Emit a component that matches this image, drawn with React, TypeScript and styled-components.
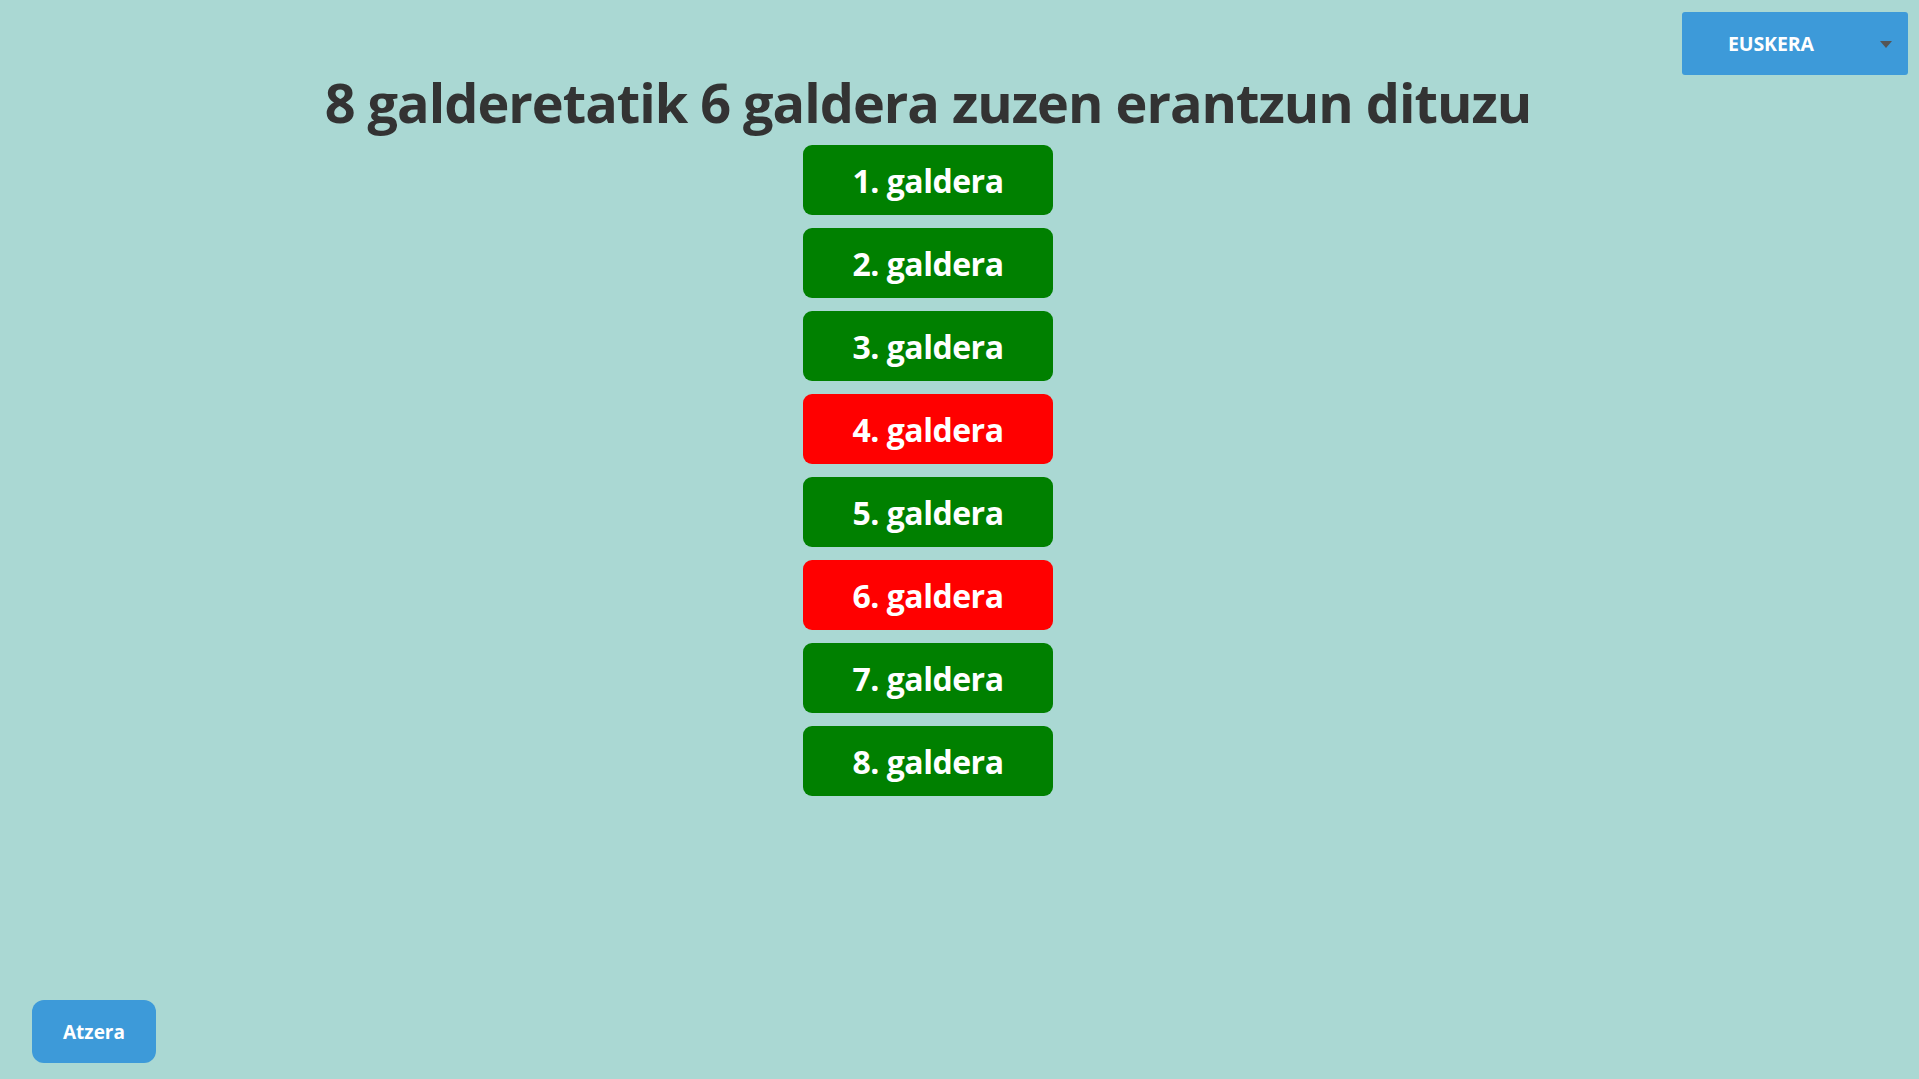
import React from "react";
import styled, { createGlobalStyle } from "styled-components";

const GlobalStyle = createGlobalStyle`
  html, body {
    margin: 0;
    padding: 0;
    background: #aad8d3;
  }
  body {
    font-family: "Open Sans", "Noto Sans", Arial, sans-serif;
  }
  * { box-sizing: border-box; }
`;

const Page = styled.div`
  min-height: 100vh;
  display: flex;
  flex-direction: column;
  background: #aad8d3;
`;

const TopBar = styled.div`
  display: flex;
  justify-content: flex-end;
  padding: 12px 11px 0 0;
`;

const LangSelect = styled.div`
  position: relative;
  width: 226px;
  height: 63px;
  background: #3d9ad9;
  border-radius: 3px;
  display: flex;
  align-items: center;
  padding-left: 46px;
  color: #ffffff;
  font-family: "Open Sans", Arial, sans-serif;
  font-weight: 700;
  font-size: 19.5px;
  letter-spacing: -0.1px;
  cursor: pointer;
`;

const Caret = styled.span`
  position: absolute;
  right: 16px;
  top: 29px;
  width: 0;
  height: 0;
  border-left: 6px solid transparent;
  border-right: 6px solid transparent;
  border-top: 7px solid #555555;
`;

const Main = styled.main`
  display: flex;
  flex-direction: column;
  align-items: center;
  padding-right: 63px;
`;

const Title = styled.h1`
  margin: 0 0 16px 0;
  font-family: "Open Sans", Arial, sans-serif;
  font-weight: 700;
  font-size: 54px;
  line-height: 1;
  color: #333333;
  letter-spacing: -1px;
`;

const QuestionList = styled.div`
  display: flex;
  flex-direction: column;
  gap: 13px;
`;

const QuestionButton = styled.button<{ $correct: boolean }>`
  width: 250px;
  height: 70px;
  border: none;
  border-radius: 9px;
  background: ${(p) => (p.$correct ? "#008000" : "#ff0000")};
  color: #ffffff;
  font-family: "Open Sans", Arial, sans-serif;
  font-weight: 700;
  font-size: 32px;
  letter-spacing: -0.5px;
  cursor: pointer;
  display: flex;
  align-items: center;
  justify-content: center;
  padding: 0;
`;

const Footer = styled.div`
  margin-top: auto;
  padding: 0 0 16px 32px;
`;

const BackButton = styled.button`
  width: 124px;
  height: 63px;
  border: none;
  border-radius: 12px;
  background: #3d9ad9;
  color: #ffffff;
  font-family: "Open Sans", Arial, sans-serif;
  font-weight: 700;
  font-size: 19px;
  cursor: pointer;
`;

const results = [true, true, true, false, true, false, true, true];

export default function App() {
  return (
    <>
      <GlobalStyle />
      <Page>
        <TopBar>
          <LangSelect>
            EUSKERA
            <Caret />
          </LangSelect>
        </TopBar>
        <Main>
          <Title>8 galderetatik 6 galdera zuzen erantzun dituzu</Title>
          <QuestionList>
            {results.map((ok, i) => (
              <QuestionButton key={i} $correct={ok}>
                {i + 1}. galdera
              </QuestionButton>
            ))}
          </QuestionList>
        </Main>
        <Footer>
          <BackButton>Atzera</BackButton>
        </Footer>
      </Page>
    </>
  );
}
